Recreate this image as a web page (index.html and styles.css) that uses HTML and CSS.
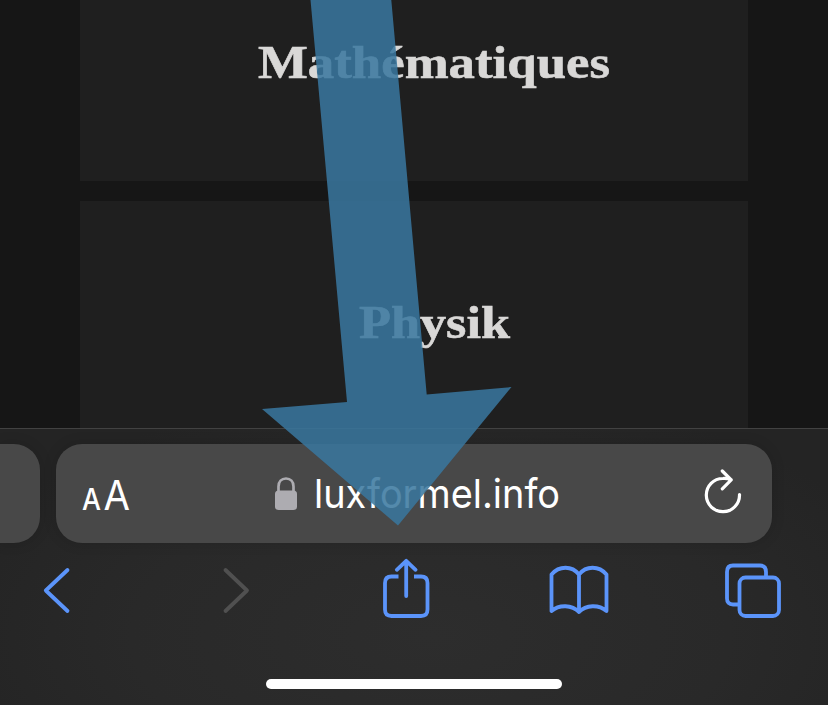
FILE: index.html
```html
<!DOCTYPE html>
<html lang="fr">
<head>
<meta charset="utf-8">
<title>luxformel.info</title>
<link rel="stylesheet" href="styles.css">
</head>
<body>
<div class="screen">
  <main class="page">
    <section class="card card-first">
      <svg class="title" width="668" height="60" role="heading" aria-level="2"><text x="178" y="43.500" textLength="352" lengthAdjust="spacingAndGlyphs">Mathématiques</text></svg>
    </section>
    <section class="card card-second">
      <svg class="title" width="668" height="60" role="heading" aria-level="2"><text x="279" y="42.500" textLength="151" lengthAdjust="spacingAndGlyphs">Physik</text></svg>
    </section>
  </main>
  <footer class="browser">
    <div class="tabs">
      <div class="tab previous"></div>
      <div class="tab address">
        <svg class="text-size" width="56" height="60"><text class="small" x="4" y="46" textLength="19" lengthAdjust="spacingAndGlyphs">A</text><text class="large" x="25.500" y="46" textLength="26.500" lengthAdjust="spacingAndGlyphs">A</text></svg>
        <div class="site">
          <svg class="lock" width="24" height="34" viewBox="0 0 24 34"><path d="M4.500 15V9.500C4.500 4.500 7.500 1.500 12 1.500s7.500 3 7.500 8V15" fill="none" stroke="#adacb1" stroke-width="2.700"/><rect x="1" y="13.500" width="22" height="19.500" rx="3.500" fill="#adacb1"/></svg>
          <svg class="domain" width="258" height="60"><text x="1" y="44" textLength="246" lengthAdjust="spacingAndGlyphs">luxformel.info</text></svg>
        </div>
        <svg class="reload" width="40" height="48" viewBox="0 0 40 48"><path d="M36.500 26.500A16.600 16.600 0 1 1 19.900 10.500Q24 10.300 28 11.500M19.300 3 28.200 11.900 19.300 20.800" fill="none" stroke="#fff" stroke-width="3.200" stroke-linecap="round" stroke-linejoin="round"/></svg>
      </div>
    </div>
    <nav class="tools">
      <svg width="28" height="48" viewBox="0 0 28 48"><path d="M25.500 4 3.800 24.500 25.500 45"/></svg>
      <svg class="forward" width="28" height="48" viewBox="0 0 28 48"><path d="M3.500 4 25 24.500 3.500 45"/></svg>
      <svg class="share" width="48" height="62" viewBox="0 0 48 62"><path class="butt" d="M16.500 18.500H9.500Q3 18.500 3 25V51.500Q3 58 9.500 58H39Q45.500 58 45.500 51.500V25Q45.500 18.500 39 18.500H32"/><path d="M24.200 38V3M14.800 11.800 24.200 2.800 33.600 11.800"/></svg>
      <svg class="book" width="60" height="50" viewBox="0 0 60 50"><path d="M2.500 45V8.500C10 -.5 23 -.5 30 8.500C37 -.5 50 -.5 57.500 8.500V45C50 38.500 37 38.500 30 46C23 38.500 10 38.500 2.500 45ZM30 8.500V46"/></svg>
      <svg class="copies" width="58" height="56" viewBox="0 0 58 56"><path class="butt" d="M15 41.500H9Q3 41.500 3 35.500V9Q3 2.500 9 2.500H36Q42 2.500 42 9V15"/><rect x="15.500" y="14.500" width="39.500" height="38.500" rx="6"/></svg>
    </nav>
    <div class="home"></div>
  </footer>
  <svg class="pointer" width="828" height="705"><path d="M310.500 0H391.300L426.700 394.500 511.500 387 398 525.500 262 409 347 402Z"/></svg>
</div>
</body>
</html>
```
FILE: styles.css
```css
body { margin: 0; background: #161616; }
svg { display: block; flex: none; }
.screen { position: relative; width: 828px; height: 705px; overflow: hidden; background: #161616; display: flex; flex-direction: column; }
.page { height: 428px; padding: 0 80px; overflow: hidden; display: flex; flex-direction: column; gap: 20px; }
.card { flex: none; background: #1f1f1f; }
.card-first { height: 147px; padding-top: 34px; }
.card-second { height: 133px; padding-top: 94px; }
.title text { font: bold 46px "Liberation Serif", serif; fill: #d9d8d7; stroke: #d9d8d7; stroke-width: .6px; }
.browser { height: 277px; box-sizing: border-box; border-top: 1px solid #424242; background: radial-gradient(ellipse 60% 90% at 52% 75%, #2d2d2d, #292929 60%, #242424 100%); }
.tabs { display: flex; gap: 16px; padding-top: 15px; }
.tab { height: 99px; background: #484848; box-shadow: 0 0 14px rgba(0, 0, 0, .14); }
.previous { width: 40px; border-radius: 0 26px 26px 0; }
.address { width: 716px; box-sizing: border-box; padding: 0 29px 0 22px; border-radius: 26px; display: flex; align-items: center; }
.text-size { margin-top: 1px; }
.text-size text { font-family: Inter, sans-serif; fill: #fff; }
.small { font-size: 30px; font-weight: 500; }
.large { font-size: 41px; }
.site { display: flex; align-items: center; gap: 15px; margin-left: 140px; }
.domain text { font: 40px Inter, sans-serif; fill: #fff; }
.reload { margin: 0 0 3px auto; }
.tools { display: flex; align-items: flex-start; padding: 23px 46px 0 42px; height: 93px; }
.tools svg { fill: none; stroke: #5b94fa; stroke-width: 3.8; stroke-linecap: round; stroke-linejoin: round; overflow: visible; }
.tools .forward { stroke: #505050; margin-left: 152px; }
.tools .butt { stroke-linecap: butt; }
.tools .share { margin: -8px 0 0 132px; }
.tools .book { margin-left: 119px; }
.tools .copies { margin: -3px 0 0 115px; }
.home { width: 296px; height: 10px; margin: 20px auto 0; border-radius: 5px; background: #fff; }
.pointer { position: absolute; left: 0; top: 0; fill: #39779f; opacity: .86; }
```
